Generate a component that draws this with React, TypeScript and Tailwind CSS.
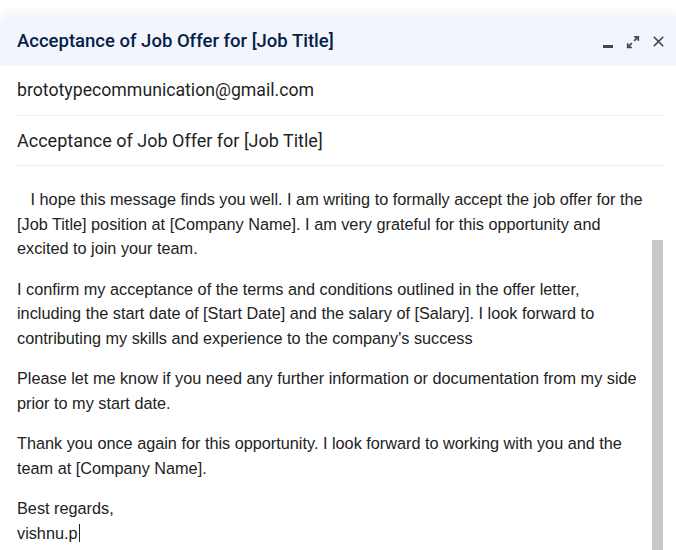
import { X } from "lucide-react";

const paragraphs = [
  "I confirm my acceptance of the terms and conditions outlined in the offer letter, including the start date of [Start Date] and the salary of [Salary]. I look forward to contributing my skills and experience to the company's success",
  "Please let me know if you need any further information or documentation from my side prior to my start date.",
  "Thank you once again for this opportunity. I look forward to working with you and the team at [Company Name].",
];

function ExpandIcon() {
  return (
    <svg width="14" height="14" viewBox="0 0 24 24" fill="none" stroke="currentColor" strokeWidth="3">
      <path d="M14 3h7v7" />
      <path d="M21 3l-7 7" />
      <path d="M10 21H3v-7" />
      <path d="M3 21l7-7" />
    </svg>
  );
}

export default function App() {
  return (
    <div className="h-[550px] w-[676px] overflow-hidden bg-white pt-[17px]">
      <div className="h-full rounded-tl-lg bg-white shadow-[0_-4px_12px_rgba(0,0,0,0.06)]">
        <div className="flex h-[49px] items-center justify-between rounded-tl-lg bg-[#f2f6fc] pl-[17px] pr-[9px]">
          <span className="font-['Roboto',sans-serif] text-[18.5px] font-medium text-[#041e49]">
            Acceptance of Job Offer for [Job Title]
          </span>
          <div className="flex items-center text-[#444746]">
            <span className="mt-[10px] h-[2.5px] w-[10px] bg-[#444746]" />
            <span className="ml-[13px]">
              <ExpandIcon />
            </span>
            <X size={17} strokeWidth={2.4} className="ml-[10px]" />
          </div>
        </div>
        <div className="pl-[16px] pr-[12px] font-['Roboto',sans-serif] text-[#1f1f1f]">
          <div className="flex h-[50px] items-center border-b border-[#eceff1] pl-px text-[17.7px]">
            brototypecommunication@gmail.com
          </div>
          <div className="flex h-[50px] items-center border-b border-[#eceff1] pl-px text-[18px]">
            Acceptance of Job Offer for [Job Title]
          </div>
        </div>
        <div className="relative pl-[17px] pr-[31px] pt-[21px] font-['Liberation_Sans',Arial,sans-serif] text-[16.25px] leading-[24.5px] text-[#222222]">
          <p className="mb-[16px] whitespace-pre-wrap">
            {"   I hope this message finds you well. I am writing to formally accept the job offer for the [Job Title] position at [Company Name]. I am very grateful for this opportunity and excited to join your team."}
          </p>
          {paragraphs.map((p) => (
            <p key={p} className="mb-[16px]">
              {p}
            </p>
          ))}
          <p>Best regards,</p>
          <p>
            vishnu.p<span className="ml-px inline-block h-[18px] w-px translate-y-[3px] bg-[#222222]" />
          </p>
          <div className="absolute right-[13px] top-[74px] h-[320px] w-[11px] bg-[#c8c8c8]" />
        </div>
      </div>
    </div>
  );
}
